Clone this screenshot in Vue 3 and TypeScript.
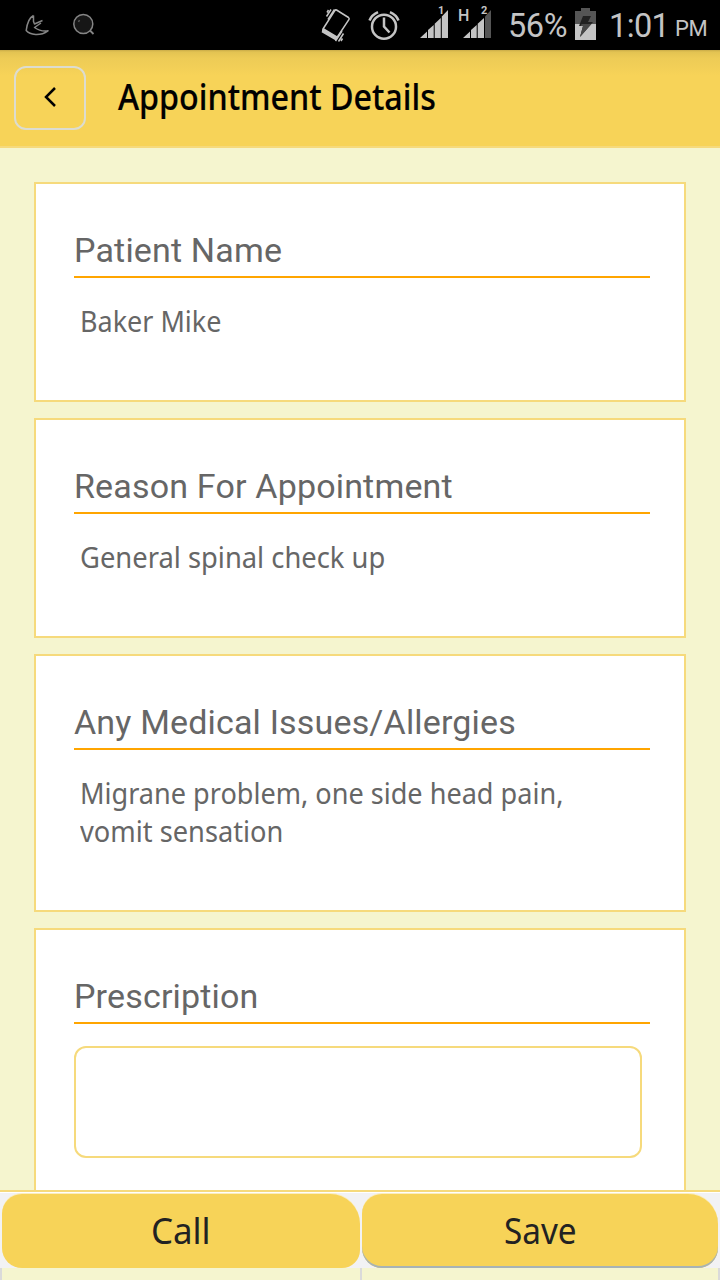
<script setup lang="ts">
interface Section {
  label: string
  lines: string[]
  widths: string[]
}

const sections: Section[] = [
  { label: 'Patient Name', lines: ['Baker Mike'], widths: ['baker'] },
  { label: 'Reason For Appointment', lines: ['General spinal check up'], widths: ['general'] },
  {
    label: 'Any Medical Issues/Allergies',
    lines: ['Migrane problem, one side head pain,', 'vomit sensation'],
    widths: ['migrane', 'vomit'],
  },
]
</script>

<template>
  <div class="screen">
    <div class="status">
      <svg class="status-icons" width="500" height="50" viewBox="0 0 500 50" fill="none">
        <g stroke="#858585" stroke-width="1.5" stroke-linejoin="round">
          <path d="M33.500 15.500C28.500 18 27 24 26.200 30.500C30 35 40 36.500 48 30.800C43 31.500 38 30 34.500 27.500L41 23M42.500 20.500L34.500 24L33.500 21.500V15.500" />
          <circle cx="83.300" cy="24" r="9.500" fill="#161616" />
          <path d="M90 30.500L93.500 34" stroke-width="1.800" />
          <path d="M78.500 22L79.500 20" stroke="#555" />
        </g>
        <g stroke="#c4c4c4" stroke-width="1.500">
          <path d="M336.500 10L348.500 17.500Q349.500 18.200 349 19.500L337 37.500Q336 39 334.500 38L323.500 31.500Q322.200 30.500 323 29L334.500 11Q335.500 9.500 336.500 10Z" />
          <path d="M323.500 29L337 37L335.500 39.500L322.500 32Z" fill="#c4c4c4" />
          <path d="M326.500 16.500L331 9.500M328 19.500L334.500 9.500M327 12.500L328.500 10M335.500 41L342 31M338.500 41.500L343.500 33.500M341 41L342.500 38.500" />
        </g>
        <g stroke="#c4c4c4" stroke-width="2.500">
          <circle cx="384" cy="26.700" r="12" />
          <path d="M384 17.500V26.500L389.500 32.500" />
          <path d="M369.500 20.500Q371.500 15 378 12.200M390 12.200Q396.500 15 398.500 20.500" />
        </g>
        <g fill="#c4c4c4">
          <path d="M420 38L427 31.500V38ZM428 38V30L433.700 25V38ZM434.700 38V23.800L440.800 18V38ZM441.800 38V16.500L448 10V38Z" />
          <path d="M463 38L470 31.500V38ZM471 38V30L476.700 25V38ZM477.700 38V23.800L484 18V38Z" />
          <path d="M485 38V16.500L491 10V38Z" fill="#555" />
        </g>
        <g class="signal-text" fill="#c4c4c4">
          <text x="438" y="14">1</text>
          <text x="481" y="14">2</text>
          <text class="network" x="458" y="21">H</text>
        </g>
      </svg>
      <span class="percent">56%</span>
      <svg class="battery" width="22" height="32" viewBox="0 0 22 32">
        <path d="M0 3H6V0H15V3H21V16H0Z" fill="#555" />
        <path d="M0 16H21V32H0Z" fill="#c4c4c4" />
        <path d="M8 8H16L13 14H18L5 29L8 18H4Z" fill="#222" />
        <path d="M6.500 16H16.500L5 29L8 18H6Z" fill="#484848" />
      </svg>
      <span class="clock">1:01</span>
      <span class="meridiem">PM</span>
    </div>

    <header class="header">
      <button class="back" aria-label="Back">
        <svg width="12" height="20" viewBox="0 0 12 20" fill="none" stroke="#000" stroke-width="2.500">
          <path d="M11 1L2 10L11 19" />
        </svg>
      </button>
      <h1 class="title"><span>Appointment Details</span></h1>
    </header>

    <main class="content">
      <section v-for="s in sections" :key="s.label" class="card">
        <h2 class="label">{{ s.label }}</h2>
        <div class="value">
          <div v-for="(line, i) in s.lines" :key="line" class="line">
            <span :class="s.widths[i]">{{ line }}</span>
          </div>
        </div>
      </section>
      <section class="card">
        <h2 class="label">Prescription</h2>
        <textarea class="field"></textarea>
      </section>
    </main>

    <footer class="footer">
      <div class="buttons">
        <button class="action call"><span>Call</span></button>
        <button class="action save"><span>Save</span></button>
      </div>
      <div class="dividers"><i></i><i></i><i></i></div>
    </footer>
  </div>
</template>

<style>
body {
  overflow: hidden;
}
</style>

<style scoped>
* {
  box-sizing: border-box;
}
.screen {
  width: 720px;
  height: 1280px;
  display: flex;
  flex-direction: column;
  overflow: hidden;
  background: #f5f5cf;
  font-family: "Noto Sans", sans-serif;
}
.status {
  height: 50px;
  flex: none;
  display: flex;
  background: #000;
  color: #c4c4c4;
  font: 32.5px/50px Roboto, sans-serif;
  white-space: nowrap;
}
.status-icons {
  flex: none;
}
.signal-text {
  font: bold 11px Roboto, sans-serif;
}
.network {
  font: 500 16px Roboto, sans-serif;
}
.percent {
  width: 75px;
  padding: 1px 0 0 8px;
  letter-spacing: -0.4px;
}
.battery {
  margin-top: 8px;
}
.clock {
  width: 78px;
  padding: 1px 0 0 12px;
  letter-spacing: -0.6px;
}
.meridiem {
  font-size: 22px;
  padding: 4px 0 0;
  letter-spacing: -0.3px;
}
.header {
  height: 98px;
  flex: none;
  display: flex;
  padding: 16px 14px 0;
  border-bottom: 2px solid #f6da7c;
  background: linear-gradient(#c9ab48 0, #e3c352 2px, #edcb56 8px, #f7d358 26px);
}
.back {
  width: 72px;
  height: 64px;
  padding: 0 0 2px;
  border: 2px solid #dcdcd0;
  border-radius: 12px;
  background: transparent;
  display: flex;
  align-items: center;
  justify-content: center;
}
.title {
  margin: 0 0 0 32px;
  font-size: 37px;
  font-weight: 500;
  line-height: 60px;
  white-space: nowrap;
  color: #000;
}
.title span,
.line span,
.action span {
  display: inline-block;
  transform-origin: 0 50%;
}
.title span {
  transform: scaleX(0.871);
  -webkit-text-stroke: 0.2px #000;
}
.line .baker {
  transform: scaleX(0.914);
}
.line .general {
  transform: scaleX(0.927);
}
.line .migrane {
  transform: scaleX(0.918);
}
.line .vomit {
  transform: scaleX(0.923);
}
.content {
  flex: 1;
  min-height: 0;
  overflow: hidden;
  padding: 34px 34px 0;
  display: flex;
  flex-direction: column;
  gap: 16px;
}
.card {
  flex: none;
  padding: 46px 34px 60px 38px;
  border: 2px solid #f6da7c;
  background: #fff;
}
.label {
  height: 48px;
  margin: 0;
  border-bottom: 2px solid #ffa500;
  color: #666;
  font: 400 34px/40px Roboto, sans-serif;
  letter-spacing: 0.17px;
  white-space: nowrap;
}
.value {
  padding: 24px 0 0 6px;
  color: #666;
  font-size: 29.5px;
  line-height: 38px;
  white-space: nowrap;
}
.line {
  height: 38px;
}
.field {
  display: block;
  width: 568px;
  height: 112px;
  margin-top: 22px;
  border: 2px solid #f6da7c;
  border-radius: 12px;
  background: #fff;
  resize: none;
}
.footer {
  height: 90px;
  flex: none;
  border-top: 2px solid #f6da7c;
}
.buttons {
  height: 76px;
  padding: 1px 2px 0;
  display: flex;
  gap: 2px;
  background: #f2f2f4;
  border-top: 1px solid #fff;
}
.action {
  padding: 0;
  height: 74px;
  border: 0;
  background: #f7d358;
  box-shadow: 0 -1px 0 #fbedbd;
  color: #222;
  font: 400 36px/74px "Noto Sans", sans-serif;
}
.action span {
  transform-origin: 50% 50%;
  transform: scaleX(0.97);
}
.save span {
  transform: scaleX(0.925);
}
.call {
  width: 358px;
  border-radius: 20px 30px 18px 20px;
}
.save {
  width: 356px;
  border-radius: 20px 30px 20px 20px;
  box-shadow: 0 -1px 0 #fbedbd, inset 0 -2px 0 #a7b3b5;
}
.dividers {
  height: 12px;
  display: flex;
  justify-content: space-between;
}
.dividers i {
  width: 2px;
  background: #dadada;
}
.dividers i:nth-child(2) {
  margin-left: 2px;
}
</style>
